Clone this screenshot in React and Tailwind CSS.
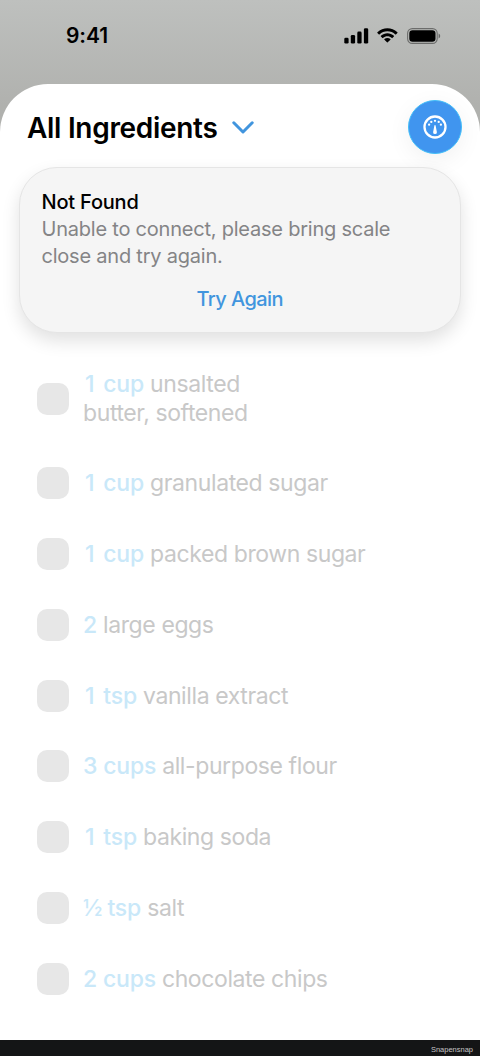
import React from 'react';

const ingredients = [
  { count: '1', unit: 'cup', name: 'unsalted butter, softened' },
  { count: '1', unit: 'cup', name: 'granulated sugar' },
  { count: '1', unit: 'cup', name: 'packed brown sugar' },
  { count: '2', unit: '', name: 'large eggs' },
  { count: '1', unit: 'tsp', name: 'vanilla extract' },
  { count: '3', unit: 'cups', name: 'all-purpose flour' },
  { count: '1', unit: 'tsp', name: 'baking soda' },
  { count: '½', unit: 'tsp', name: 'salt' },
  { count: '2', unit: 'cups', name: 'chocolate chips' },
];

// the narrow "1" is padded out to the width of the other digits
const countStyles = {
  '1': 'pl-[2px] pr-[3px]',
  '½': 'font-normal tracking-[-1px]',
};

function StatusBar() {
  return (
    <div className="flex h-[84px] shrink-0 items-start justify-between pl-[66px] pr-[39px] pt-[22px]">
      <span className="text-[21px] font-semibold leading-[28px] tracking-[-0.1px]">9:41</span>
      <div className="flex h-[28px] items-center">
        <svg width="25" height="16" viewBox="0 0 25 16">
          <rect x="0.3" y="9.8" width="4.3" height="5.7" rx="1.3" />
          <rect x="6.8" y="7" width="4.3" height="8.5" rx="1.3" />
          <rect x="13.3" y="3.6" width="4.3" height="11.9" rx="1.3" />
          <rect x="19.9" y="0.3" width="4.3" height="15.2" rx="1.3" />
        </svg>
        <svg className="ml-[8px]" width="21" height="16" viewBox="0 0 21 16">
          <path d="M10.4 3.3c3 0 5.8 1.1 7.9 3.1.2.2.4.2.6 0l1.5-1.5c.2-.2.2-.5 0-.7C14.8-1 6-1 .4 4.2c-.2.2-.2.5 0 .7l1.5 1.5c.2.2.4.2.6 0 2.1-2 4.9-3.1 7.9-3.1z" />
          <path d="M10.4 8.3c1.6 0 3.2.6 4.4 1.7.2.2.5.2.6 0l1.5-1.5c.2-.2.2-.5 0-.7-3.7-3.4-9.3-3.4-13 0-.2.2-.2.5 0 .7L5.4 10c.2.2.4.2.6 0 1.2-1.1 2.8-1.7 4.4-1.7z" />
          <path d="M13.4 11.7c.2-.2.2-.5 0-.7-1.7-1.5-4.3-1.5-6 0-.2.2-.2.5 0 .7l2.6 2.6c.2.3.5.3.7 0z" />
        </svg>
        <svg className="ml-[9px]" width="34" height="16" viewBox="0 0 34 16">
          <rect x="0.6" y="0.6" width="29.6" height="14.8" rx="4.7" fill="none" stroke="#000" strokeOpacity="0.42" strokeWidth="1.1" />
          <rect x="2.3" y="2.3" width="26.2" height="11.4" rx="3.2" />
          <path d="M31.6 5.5v5c1-.4 1.6-1.4 1.6-2.5s-.6-2.1-1.6-2.5z" fillOpacity="0.45" />
        </svg>
      </div>
    </div>
  );
}

function GaugeIcon() {
  return (
    <svg width="24" height="24" viewBox="0 0 24 24" fill="#fff">
      <circle cx="12" cy="12" r="10.5" fill="none" stroke="#fff" strokeWidth="2.3" />
      <circle cx="6.1" cy="9.7" r="1.15" />
      <circle cx="8.3" cy="6.9" r="1.15" />
      <circle cx="12" cy="5.8" r="1.15" />
      <circle cx="15.7" cy="6.9" r="1.15" />
      <circle cx="17.9" cy="9.7" r="1.15" />
      <path d="M11.4 10.5c.1-.8 1.100-.8 1.200 0l1.300 6.700a1.900 1.900 0 1 1-3.800 0z" />
    </svg>
  );
}

function Notice() {
  return (
    <section className="mx-[19px] h-[166px] rounded-[38px] border border-[#e5e5e5] bg-[#f5f5f5] pl-[21.5px] pr-[22px] pt-[21px] shadow-[0_8px_18px_rgba(0,0,0,0.12)]">
      <h2 className="text-[20px] font-medium leading-[27px] tracking-[-0.2px]">Not Found</h2>
      <p className="text-[20px] leading-[27px] tracking-[-0.22px] text-[#848486]">
        Unable to connect, please bring scale
        <br />
        close and try again.
      </p>
      <button className="mt-[15px] block w-full text-center text-[20px] font-medium leading-[28px] tracking-[-0.55px] text-[#4195de]">
        Try Again
      </button>
    </section>
  );
}

export default function App() {
  return (
    <div className="flex h-[1056px] w-[480px] flex-col overflow-hidden bg-linear-to-b from-[#bec0be] from-0% to-[#b0b1ae] to-[10%] font-['Inter',sans-serif] text-black">
      <StatusBar />

      <main className="flex min-h-0 flex-1 flex-col rounded-t-[48px] bg-white">
        <header className="flex h-[83px] shrink-0 items-center justify-between pl-[27px] pr-[18px] pt-[3px]">
          <button className="flex items-center gap-[14px]">
            <span className="pt-px text-[28px] font-semibold leading-[34px] tracking-[-0.3px]">All Ingredients</span>
            <svg width="22" height="13" viewBox="0 0 22 13" fill="none" stroke="#4195de" strokeWidth="3" strokeLinecap="round" strokeLinejoin="round">
              <path d="M1.8 1.8 11 11l9.2-9.2" />
            </svg>
          </button>
          <button className="flex size-[54px] items-center justify-center rounded-full border border-[#43bff9] bg-[#4095ef] pr-px shadow-[0_6px_24px_rgba(0,0,0,0.06)]">
            <GaugeIcon />
          </button>
        </header>

        <Notice />

        <ul className="flex flex-col gap-[38.8px] pl-[36.5px] pt-[36.4px]">
          {ingredients.map((item) => (
            <li key={item.name} className="flex min-h-[32px] items-center gap-[14.5px]">
              <span className="size-[32px] shrink-0 rounded-[10px] bg-[#e7e7e7]" />
              <p className="pt-px text-[23px] leading-[29px] tracking-[-0.4px] text-[#c8c8c8]">
                <span className="font-medium tracking-[-0.2px] text-[#c9e8f9]">
                  <span className={countStyles[item.count]}>{item.count}</span>
                  {item.unit && ` ${item.unit}`}
                </span>{' '}
                {item.name === 'unsalted butter, softened' ? (
                  <>
                    unsalted
                    <br />
                    butter, softened
                  </>
                ) : (
                  item.name
                )}
              </p>
            </li>
          ))}
        </ul>
      </main>

      <footer className="flex h-[16px] shrink-0 items-center justify-end bg-[#141516] pr-[7px] pt-[3px]">
        <span className="font-['Liberation_Sans',sans-serif] text-[7.5px] leading-none text-[#c4c4c4]">Snapensnap</span>
      </footer>
    </div>
  );
}
